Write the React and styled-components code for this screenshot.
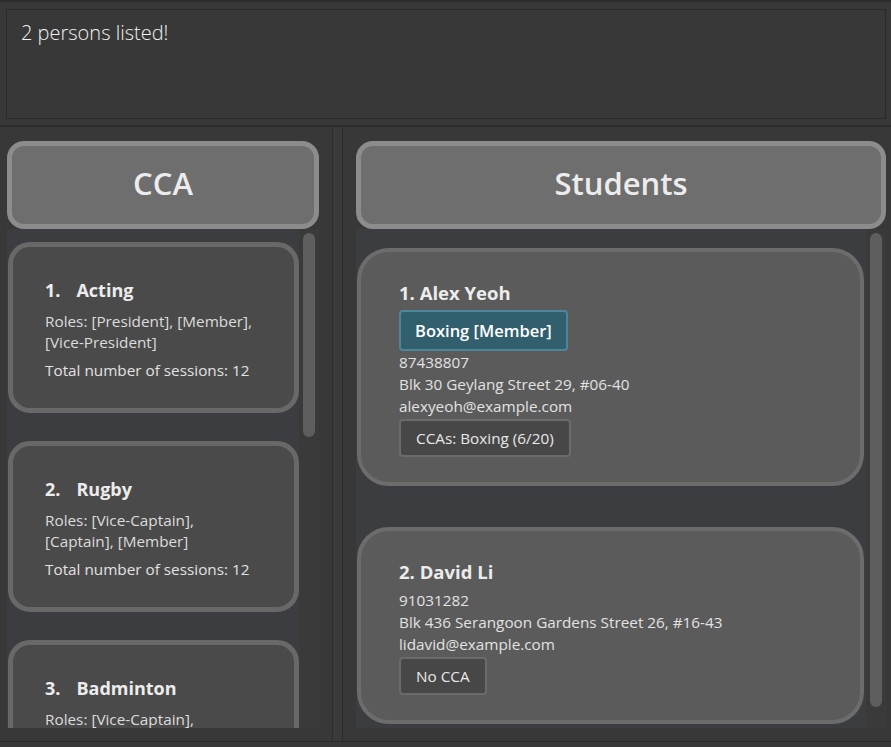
import styled, { createGlobalStyle } from 'styled-components';

const GlobalStyle = createGlobalStyle`
  html, body {
    margin: 0;
    padding: 0;
    background: #383838;
  }
  body {
    font-family: "Open Sans", "Noto Sans", sans-serif;
    color: #e0e0e0;
  }
  * { box-sizing: border-box; }
`;

const ccas = [
    { name: 'Acting', roles: ['Roles: [President], [Member],', '[Vice-President]'], sessions: 12 },
    { name: 'Rugby', roles: ['Roles: [Vice-Captain],', '[Captain], [Member]'], sessions: 12 },
    { name: 'Badminton', roles: ['Roles: [Vice-Captain],', '[Captain], [Member]'], sessions: 12 },
];

const students = [
    {
        name: 'Alex Yeoh',
        tag: 'Boxing [Member]',
        phone: '87438807',
        address: 'Blk 30 Geylang Street 29, #06-40',
        email: 'alexyeoh@example.com',
        ccaText: 'CCAs: Boxing (6/20)',
    },
    {
        name: 'David Li',
        tag: null,
        phone: '91031282',
        address: 'Blk 436 Serangoon Gardens Street 26, #16-43',
        email: 'lidavid@example.com',
        ccaText: 'No CCA',
    },
];

const App = () => {
    return (
        <StyledWindow>
            <GlobalStyle />

            <StyledResultArea>
                <StyledResultBox>2 persons listed!</StyledResultBox>
            </StyledResultArea>

            <StyledSplit>
                <StyledPane $side="left">
                    <StyledHeader>CCA</StyledHeader>
                    <StyledListRow>
                        <StyledList $gap={28} $top={13}>
                            {ccas.map((cca, i) => (
                                <StyledCcaCard key={cca.name}>
                                    <StyledCcaTitle>
                                        <span>{i + 1}.</span>
                                        <span>{cca.name}</span>
                                    </StyledCcaTitle>
                                    <StyledRoles>
                                        {cca.roles.map((r) => <div key={r}>{r}</div>)}
                                    </StyledRoles>
                                    <StyledDetail>Total number of sessions: {cca.sessions}</StyledDetail>
                                </StyledCcaCard>
                            ))}
                        </StyledList>
                        <StyledScrollTrack>
                            <StyledThumb $height={204} />
                        </StyledScrollTrack>
                    </StyledListRow>
                </StyledPane>

                <StyledDivider />

                <StyledPane $side="right">
                    <StyledHeader>Students</StyledHeader>
                    <StyledListRow>
                        <StyledList $gap={41} $top={19}>
                            {students.map((s, i) => (
                                <StyledStudentCard key={s.name}>
                                    <StyledStudentName>{i + 1}. {s.name}</StyledStudentName>
                                    {s.tag && <StyledTag>{s.tag}</StyledTag>}
                                    <StyledDetail>{s.phone}</StyledDetail>
                                    <StyledDetail>{s.address}</StyledDetail>
                                    <StyledDetail>{s.email}</StyledDetail>
                                    <StyledCcaBox>{s.ccaText}</StyledCcaBox>
                                </StyledStudentCard>
                            ))}
                        </StyledList>
                        <StyledScrollTrack>
                            <StyledThumb $height={474} />
                        </StyledScrollTrack>
                    </StyledListRow>
                </StyledPane>
            </StyledSplit>
        </StyledWindow>
    );
};

// Styled Components
const StyledWindow = styled.div`
width: 891px;
height: 747px;
display: flex;
flex-direction: column;
overflow: hidden;
background: #383838;
border-top: 2px solid #2d2d2d;
`;

const StyledResultArea = styled.div`
flex: none;
height: 125px;
padding: 7px 5px 6px 6px;
border-bottom: 2px solid #2c2c2c;
display: flex;
`;

const StyledResultBox = styled.div`
flex: 1;
border: 1px solid #2a2a2a;
background: #383838;
padding: 9px 14px;
font-size: 20px;
font-weight: 300;
color: #f2f2f2;
`;

const StyledSplit = styled.div`
flex: 1;
min-height: 0;
display: flex;
border-bottom: 1px solid #2c2c2c;
margin-bottom: 5px;
`;

const StyledPane = styled.div`
display: flex;
flex-direction: column;
padding: ${(p) => (p.$side === 'left' ? '14px 13px 13px 7px' : '14px 5px 13px 13px')};
width: ${(p) => (p.$side === 'left' ? '333px' : 'auto')};
flex: ${(p) => (p.$side === 'left' ? 'none' : '1')};
border-right: ${(p) => (p.$side === 'left' ? '1px solid #2c2c2c' : 'none')};
border-left: ${(p) => (p.$side === 'right' ? '1px solid #2c2c2c' : 'none')};
min-height: 0;
`;

const StyledDivider = styled.div`
width: 9px;
background: #3a3a3a;
`;

const StyledHeader = styled.div`
height: 88px;
flex: none;
border: 5px solid #8c8c8c;
border-radius: 17px;
background: #6e6e6e;
display: flex;
justify-content: center;
align-items: center;
font-size: 31px;
font-weight: 600;
color: #ececec;
padding-bottom: 4px;
`;

const StyledListRow = styled.div`
flex: 1;
display: flex;
min-height: 0;
overflow: hidden;
`;

const StyledList = styled.div`
flex: 1;
min-height: 0;
background: #3c3d40;
display: flex;
flex-direction: column;
gap: ${(p) => p.$gap}px;
padding: ${(p) => p.$top}px 1px 0 1px;
overflow: hidden;
`;

const StyledScrollTrack = styled.div`
width: 20px;
flex: none;
padding: 4px 4px 0 4px;
background: #3a3a3a;
`;

const StyledThumb = styled.div`
height: ${(p) => p.$height}px;
border-radius: 6px;
background: #5e5e5e;
`;

const StyledCcaCard = styled.div`
flex: none;
height: 171px;
width: 291px;
border: 5px solid #686868;
border-radius: 22px;
background: #4a4a4a;
padding: 30px 12px 0 32px;
display: flex;
flex-direction: column;
`;

const StyledCcaTitle = styled.div`
display: flex;
gap: 16px;
font-size: 18px;
font-weight: 700;
line-height: 26px;
color: #ececec;
margin-bottom: 8px;
`;

const StyledRoles = styled.div`
font-size: 15.3px;
line-height: 21px;
color: #dcdcdc;
margin-bottom: 6px;
`;

const StyledDetail = styled.div`
font-size: 15.3px;
line-height: 22px;
color: #e2e2e2;
white-space: nowrap;
`;

const StyledStudentCard = styled.div`
flex: none;
width: 507px;
border: 4px solid #6c6c6c;
border-radius: 32px;
background: #5b5b5b;
padding: 28px 20px 25px 38px;
display: flex;
flex-direction: column;
align-items: flex-start;
`;

const StyledStudentName = styled.div`
font-size: 18.5px;
font-weight: 700;
line-height: 26px;
color: #ececec;
margin-bottom: 4px;
`;

const StyledTag = styled.div`
height: 41px;
padding: 0 14px;
border: 2px solid #4c8799;
border-radius: 4px;
background: #325f6e;
color: #ffffff;
font-size: 16.5px;
font-weight: 600;
display: flex;
align-items: center;
`;

const StyledCcaBox = styled.div`
margin-top: 2px;
height: 38px;
padding: 0 15px;
border: 2px solid #6b6b6b;
border-radius: 4px;
background: #474747;
color: #e8e8e8;
font-size: 15.3px;
display: flex;
align-items: center;
`;

export default App;
